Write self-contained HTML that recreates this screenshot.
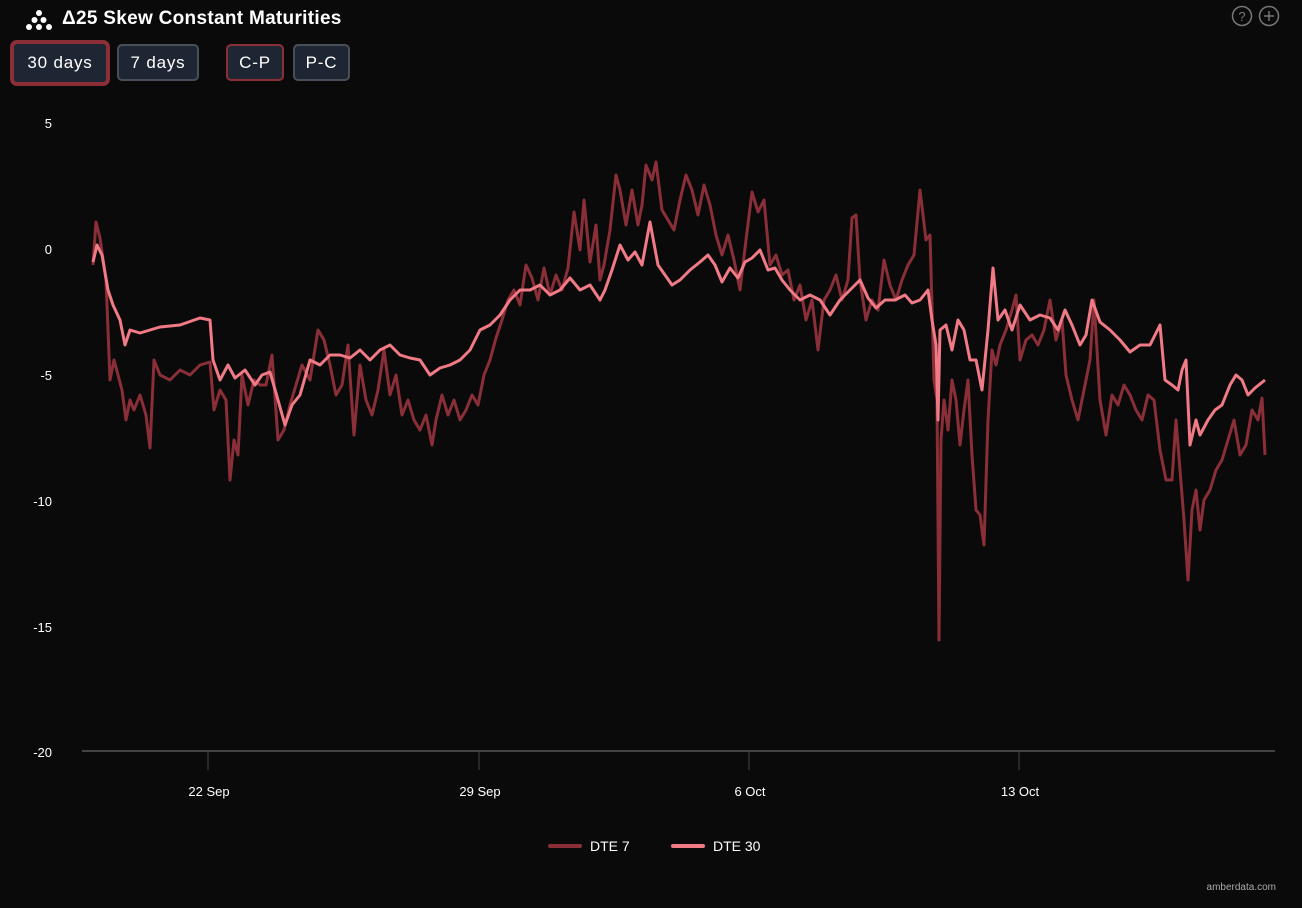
<!DOCTYPE html>
<html><head><meta charset="utf-8"><style>
body{margin:0;width:1302px;height:908px;background:#0a0a0a;overflow:hidden;font-family:"Liberation Sans",sans-serif;color:#fff;position:relative}
.t{position:absolute;left:62px;top:8px;font-size:19px;font-weight:bold;letter-spacing:.3px}
.b{position:absolute;top:44px;height:37px;box-sizing:border-box;background:#1f2633;border:2px solid #4a4e56;border-radius:5px;font-size:17px;line-height:33px;text-align:center;letter-spacing:.8px}
</style></head><body>
<svg style="position:absolute;left:24px;top:9px" width="30" height="22" viewBox="0 0 30 22"><g fill="#fff"><circle cx="15" cy="4" r="3"/><circle cx="10.5" cy="11" r="3"/><circle cx="19.5" cy="11" r="3"/><circle cx="5" cy="18" r="3"/><circle cx="15" cy="18" r="3"/><circle cx="25" cy="18" r="3"/></g></svg>
<div class="t">Δ25 Skew Constant Maturities</div>
<div class="b" style="left:10px;width:100px;border:4px solid #8a2f38;border-radius:7px;top:40px;height:46px;line-height:38px">30 days</div>
<div class="b" style="left:117px;width:82px">7 days</div>
<div class="b" style="left:226px;width:58px;border-color:#8a2f38">C-P</div>
<div class="b" style="left:293px;width:57px">P-C</div>
<svg style="position:absolute;left:1230px;top:5px" width="52" height="22"><g fill="none" stroke="#777" stroke-width="1.5"><circle cx="12" cy="11" r="9.5"/><circle cx="39" cy="11" r="9.5"/><path d="M39 6v10M34 11h10"/></g><text x="12" y="16" font-size="13" fill="#777" text-anchor="middle" font-family="Liberation Sans">?</text></svg>
<svg style="position:absolute;left:0;top:0" width="1302" height="908">
<g font-size="13" fill="#fff" font-family="Liberation Sans" text-anchor="end">
<text x="52" y="128">5</text><text x="52" y="254">0</text><text x="52" y="380">-5</text><text x="52" y="506">-10</text><text x="52" y="632">-15</text><text x="52" y="757">-20</text></g>
<line x1="82" y1="751" x2="1275" y2="751" stroke="#444" stroke-width="2"/>
<g stroke="#444"><line x1="208" y1="751" x2="208" y2="770"/><line x1="479" y1="751" x2="479" y2="770"/><line x1="749" y1="751" x2="749" y2="770"/><line x1="1019" y1="751" x2="1019" y2="770"/></g>
<g font-size="13" fill="#fff" font-family="Liberation Sans" text-anchor="middle"><text x="209" y="796">22 Sep</text><text x="480" y="796">29 Sep</text><text x="750" y="796">6 Oct</text><text x="1020" y="796">13 Oct</text></g>
<polyline fill="none" stroke="#8a2f38" stroke-width="3" stroke-linejoin="round" points="93,265 96,222 100,238 106,280 110,380 114,360 118,375 122,390 126,420 130,400 134,410 140,395 146,415 150,448 154,360 160,375 170,380 180,370 190,375 200,365 210,362 214,410 220,390 226,400 230,480 234,440 238,455 242,375 248,405 254,380 260,385 266,385 272,355 278,440 284,430 290,405 296,385 302,365 310,380 318,330 324,340 330,365 336,395 342,385 348,345 354,435 360,365 366,400 372,415 378,390 384,350 390,395 396,375 402,415 408,400 414,420 420,430 426,415 432,445 436,420 442,395 448,415 454,400 460,420 466,410 472,395 478,405 484,375 490,360 496,338 502,320 508,300 514,290 520,305 526,265 532,278 538,300 544,268 550,295 556,275 562,290 568,268 574,212 580,250 584,200 590,262 596,225 600,280 604,265 610,230 616,175 620,190 626,225 632,190 638,225 642,205 646,165 652,180 656,162 662,210 668,220 674,230 680,200 686,175 692,190 698,215 704,185 710,205 716,235 722,255 728,235 734,260 740,290 746,240 752,192 758,212 764,200 770,265 776,255 782,275 788,270 794,300 800,285 806,320 812,300 818,350 824,300 830,290 836,275 842,300 848,280 852,218 856,215 860,280 866,320 872,300 878,310 884,260 890,285 896,300 902,280 908,265 914,255 920,190 926,240 930,235 934,380 937,400 939,640 941,440 944,400 948,430 952,380 956,400 960,445 964,410 968,380 972,455 976,510 980,515 984,545 988,420 992,350 996,365 1000,345 1006,330 1012,310 1016,295 1020,360 1026,340 1032,335 1038,345 1044,330 1050,300 1056,340 1062,320 1066,375 1072,400 1078,420 1084,390 1090,360 1094,300 1100,400 1106,435 1112,395 1118,405 1124,385 1130,395 1136,410 1142,420 1148,395 1154,400 1160,450 1166,480 1172,480 1176,420 1180,470 1184,520 1188,580 1192,510 1196,490 1200,530 1204,500 1210,490 1216,470 1222,460 1228,440 1234,420 1240,455 1246,445 1252,410 1258,420 1262,398 1265,455"/>
<polyline fill="none" stroke="#f07a85" stroke-width="3" stroke-linejoin="round" points="93,262 97,245 102,255 108,290 113,305 120,320 125,345 130,330 140,333 160,327 180,325 200,318 210,320 213,360 220,380 228,365 235,378 245,370 255,385 262,375 270,372 278,400 285,425 292,405 300,395 310,360 320,365 330,355 340,355 350,358 360,350 370,360 380,350 390,345 400,355 410,358 420,360 430,375 440,368 450,365 460,360 470,350 480,330 490,325 500,315 510,300 520,290 530,290 540,285 550,295 560,290 570,278 580,290 590,285 600,300 605,290 612,270 620,245 628,260 635,252 642,265 650,222 658,265 665,275 672,285 680,280 690,270 700,262 708,255 715,265 722,282 730,268 738,278 745,262 752,258 760,250 768,270 775,268 782,280 790,290 800,300 810,295 820,300 830,315 840,300 850,290 860,280 868,298 876,308 885,300 895,300 905,295 912,303 920,300 928,290 932,320 936,345 938,420 940,330 946,325 952,350 958,320 964,330 970,360 976,360 982,390 988,330 993,268 998,320 1005,310 1012,330 1020,305 1030,320 1040,315 1050,318 1058,330 1065,310 1072,325 1080,345 1086,335 1092,300 1100,322 1110,330 1120,340 1130,352 1140,345 1150,345 1160,325 1165,380 1172,385 1178,390 1182,370 1186,360 1190,445 1196,420 1200,435 1208,420 1215,410 1222,405 1230,385 1236,375 1242,380 1248,395 1255,388 1265,380"/>
<line x1="550" y1="846" x2="580" y2="846" stroke="#8a2f38" stroke-width="4" stroke-linecap="round"/>
<text x="590" y="851" font-size="14" fill="#fff" font-family="Liberation Sans">DTE 7</text>
<line x1="673" y1="846" x2="703" y2="846" stroke="#f07a85" stroke-width="4" stroke-linecap="round"/>
<text x="713" y="851" font-size="14" fill="#fff" font-family="Liberation Sans">DTE 30</text>
<text x="1276" y="890" font-size="10" fill="#aaa" text-anchor="end" font-family="Liberation Sans">amberdata.com</text>
</svg>
</body></html>
